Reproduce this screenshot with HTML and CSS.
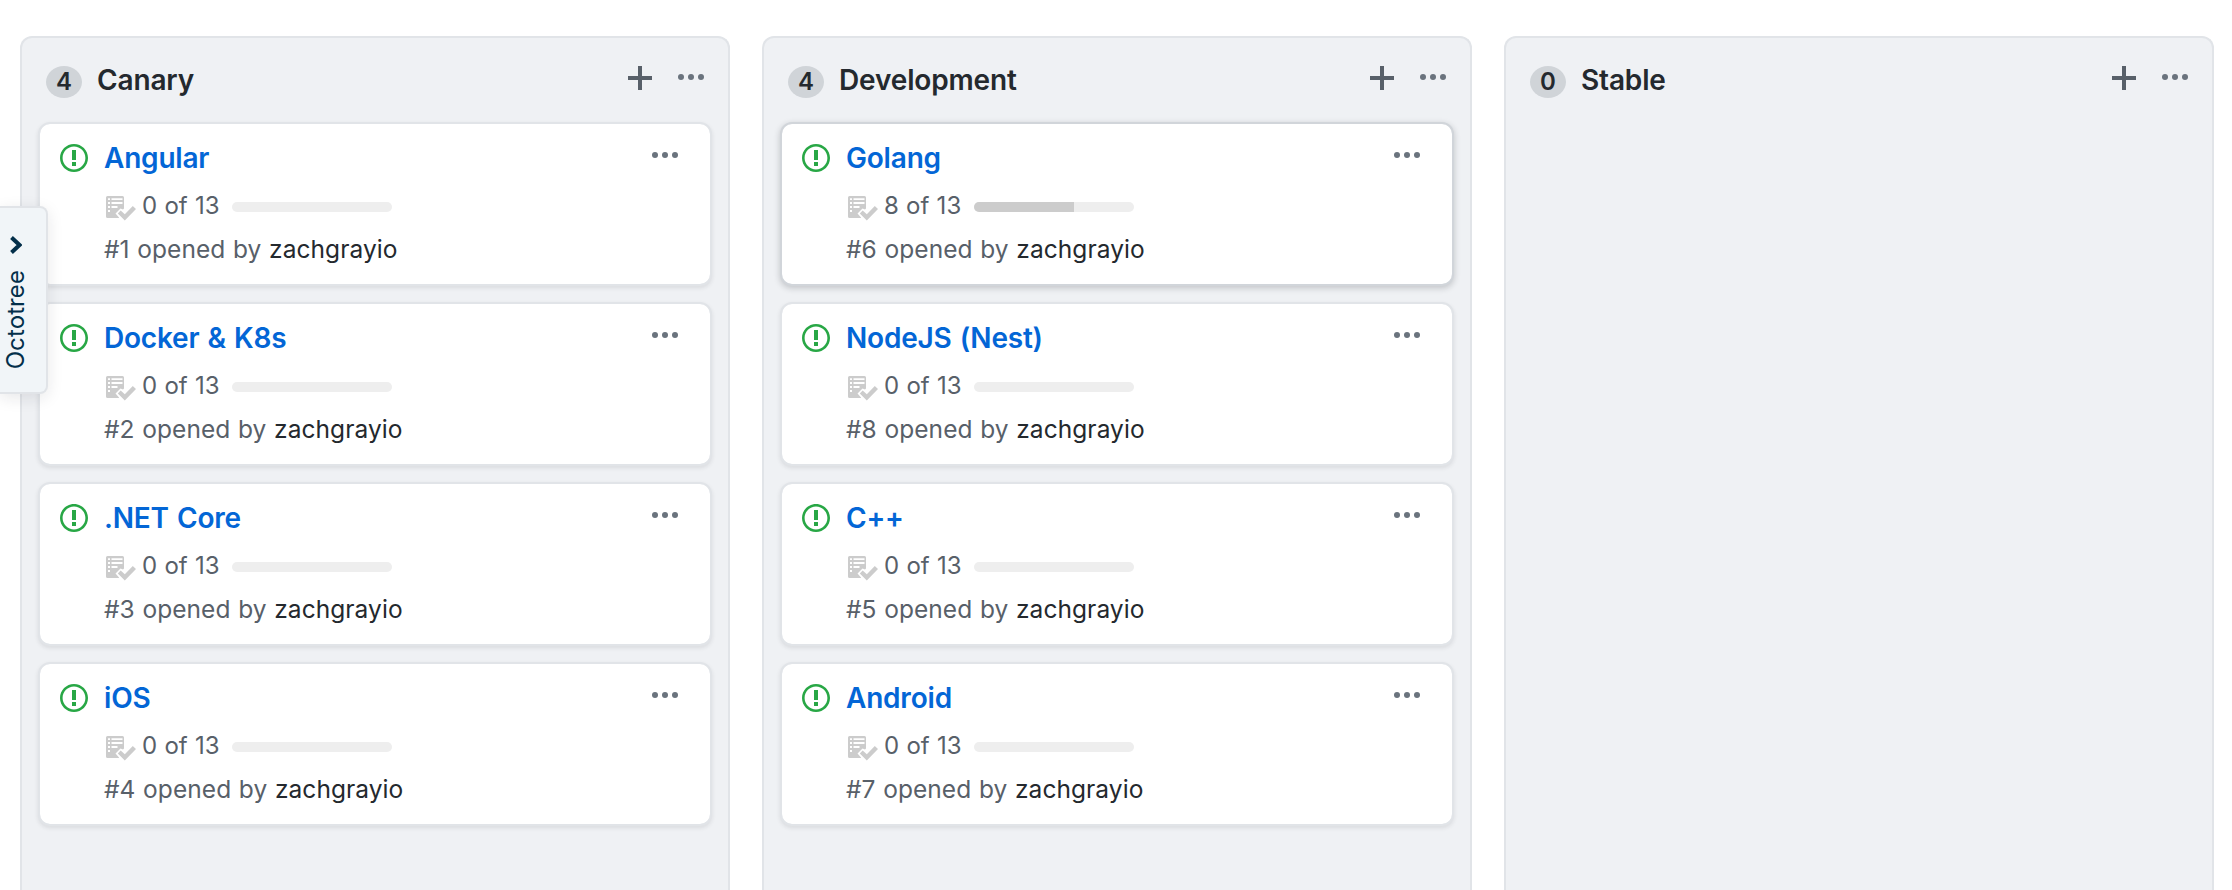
FILE: index.html
```html
<!DOCTYPE html>
<html lang="en">
<head>
<meta charset="utf-8">
<title>Project board</title>
<link rel="stylesheet" href="styles.css">
</head>
<body>
<svg class="sprite" aria-hidden="true">
  <symbol id="issue" viewBox="0 0 14 16"><path fill-rule="evenodd" d="M7 2.3c3.14 0 5.7 2.56 5.7 5.7s-2.56 5.7-5.7 5.7A5.71 5.71 0 0 1 1.3 8c0-3.14 2.56-5.7 5.7-5.7zM7 1C3.14 1 0 4.14 0 8s3.14 7 7 7 7-3.14 7-7-3.14-7-7-7zm1 3H6v5h2V4zm0 6H6v2h2v-2z"/></symbol>
  <symbol id="plus" viewBox="0 0 12 16"><path d="M12 9H7v5H5V9H0V7h5V2h2v5h5v2z"/></symbol>
  <symbol id="kebab" viewBox="0 0 13 16"><circle cx="1.5" cy="7.5" r="1.5"/><circle cx="6.5" cy="7.5" r="1.5"/><circle cx="11.5" cy="7.5" r="1.5"/></symbol>
  <symbol id="tasks" viewBox="0 0 30 25"><path fill-rule="evenodd" d="M1.5 0h15A1.5 1.5 0 0 1 18 1.500V12.500L17 13.500L14.500 12.500L9.500 17.500L13 21.500V22H1.500A1.500 1.500 0 0 1 0 20.500V1.500A1.500 1.500 0 0 1 1.500 0zM2 2.200v1.800h2V2.200zM5.500 2.200v1.800h11V2.200zM2 6.100v1.800h2V6.100zM5.500 6.100v1.800h11V6.100zM2 10.100v1.800h2v-1.800zM5.500 10.100v1.800h6v-1.800zM2 14.100v1.800h2v-1.800z"/><path d="M14.700 14.500L11.800 17.400l7 7.200L30 13l-3.200-3L18.800 18.200z"/></symbol>
</svg>
<main class="board" id="board"></main>
<aside class="drawer">
  <svg class="chevron" viewBox="0 0 12 18"><path d="M1.500 1.500L9.500 9l-8 7.500" fill="none" stroke="currentColor" stroke-width="4"/></svg>
  <span class="drawer-label">Octotree</span>
</aside>
<script src="board.js"></script>
</body>
</html>
```
FILE: styles.css
```css
* { box-sizing: border-box; }
body {
  margin: 0;
  height: 890px;
  overflow: hidden;
  background: #fff;
  color: #24292e;
  font-family: Inter, "Liberation Sans", sans-serif;
}
svg { display: block; fill: currentColor; }
.sprite { width: 0; height: 0; position: absolute; }
.board { display: flex; gap: 32px; height: 890px; padding: 36px 18px 0 20px; }
.column {
  flex: none;
  width: 710px;
  padding: 0 16px;
  border: 2px solid #e1e4e8;
  border-bottom: 0;
  border-radius: 12px 12px 0 0;
  background: #eff1f4;
}
.column-header { display: flex; height: 84px; padding: 24px 8px 0; align-items: flex-start; }
.count {
  width: 36px;
  height: 32px;
  margin-top: 4px;
  border-radius: 18px / 16px;
  background: #d0d4d8;
  font-size: 24px;
  font-weight: 600;
  line-height: 31px;
  text-align: center;
}
.column-title { margin: 0 auto 0 15px; font-size: 28px; font-weight: 600; line-height: 36px; letter-spacing: -.15px; }
.icon-plus { width: 24px; height: 32px; margin-right: 26px; color: #586069; }
.icon-kebab { width: 26px; height: 32px; color: #6a737d; }
.cards { display: flex; flex-direction: column; gap: 16px; }
.card {
  display: flex;
  height: 164px;
  padding: 16px 32px 0 20px;
  border: 2px solid #e1e4e8;
  border-radius: 12px;
  background: #fff;
  background-clip: padding-box;
  box-shadow: 0 2px 4px rgba(27, 31, 35, .1);
}
.card.active { border-color: #d1d5da; box-shadow: 0 2px 6px rgba(27, 31, 35, .22); }
.icon-issue { width: 28px; height: 32px; margin-top: 2px; color: #28a745; }
.card-body { flex: 1; padding-left: 16px; }
.card-title { margin: 0; color: #0366d6; font-size: 28px; font-weight: 600; line-height: 36px; letter-spacing: -.2px; word-spacing: 1.3px; }
.progress-row { display: flex; align-items: center; height: 32px; margin-top: 15px; color: #586069; font-size: 24px; }
.icon-tasks { width: 30px; height: 25px; margin: 2px 6px 0 2px; color: #ccc; }
.progress-text { width: 90px; line-height: 30px; margin-top: -2px; word-spacing: .5px; white-space: nowrap; }
.bar { width: 160px; height: 10px; border-radius: 6px; background: #eee; overflow: hidden; }
.bar-fill { height: 10px; background: #ccc; }
.meta { margin: 8px 0 0; color: #586069; font-size: 24.5px; line-height: 36px; letter-spacing: .06px; word-spacing: .7px; }
.author { color: #24292e; }
.drawer {
  position: absolute;
  left: 0;
  top: 206px;
  display: flex;
  flex-direction: column;
  align-items: flex-start;
  width: 48px;
  height: 188px;
  padding-top: 28px;
  border: 2px solid #e1e4e8;
  border-left: 0;
  border-radius: 0 8px 8px 0;
  background: #f1f5f8;
  box-shadow: 0 4px 16px rgba(27, 31, 35, .1);
  color: #032f4a;
}
.chevron { width: 12px; height: 18px; margin-left: 10px; }
.drawer-label { writing-mode: vertical-rl; transform: rotate(180deg); margin: 16px 0 0 2px; font-size: 24px; line-height: 28px; letter-spacing: .1px; }
```
FILE: board.js
```js
// Each card: title, issue number, completed tasks, progress percentage
const columns = [
  { title: 'Canary', cards: [['Angular', 1, 0, 0], ['Docker & K8s', 2, 0, 0], ['.NET Core', 3, 0, 0], ['iOS', 4, 0, 0]] },
  { title: 'Development', cards: [['Golang', 6, 8, 62.5], ['NodeJS (Nest)', 8, 0, 0], ['C++', 5, 0, 0], ['Android', 7, 0, 0]] },
  { title: 'Stable', cards: [] }
];
const icon = name => `<svg class="icon-${name}"><use href="#${name}"/></svg>`;
const card = ([title, number, done, percent]) => `
  <article class="card${done ? ' active' : ''}">
    ${icon('issue')}
    <div class="card-body">
      <h3 class="card-title">${title.replace('&', '&amp;')}</h3>
      <div class="progress-row">${icon('tasks')}<span class="progress-text">${done} of 13</span>
        <div class="bar"><div class="bar-fill" style="width:${percent}%"></div></div></div>
      <p class="meta">#${number} opened by <span class="author">zachgrayio</span></p>
    </div>
    ${icon('kebab')}
  </article>`;
document.getElementById('board').innerHTML = columns.map(c => `
  <section class="column">
    <header class="column-header"><span class="count">${c.cards.length}</span>
      <h2 class="column-title">${c.title}</h2>${icon('plus')}${icon('kebab')}</header>
    <div class="cards">${c.cards.map(card).join('')}</div>
  </section>`).join('');
```
